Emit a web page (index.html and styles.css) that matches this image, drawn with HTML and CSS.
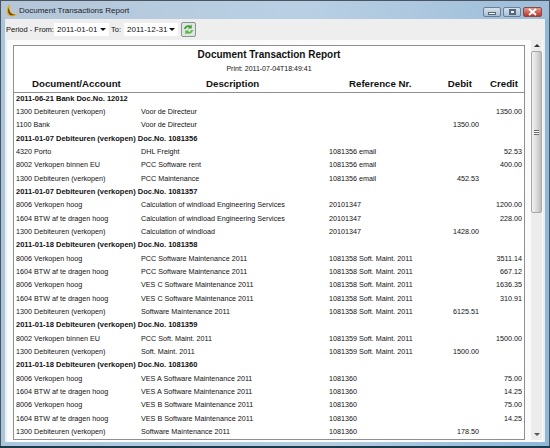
FILE: index.html
```html
<!DOCTYPE html>
<html lang="en">

<head>
    <meta charset="UTF-8">
    <title>Document Transactions Report</title>
    <link rel="stylesheet" href="styles.css">
</head>

<body>
    <div class="window">
        <div class="titlebar">
            <svg class="app-icon" width="13" height="13" viewBox="0 0 13 13">
                <path d="M5 0C1.500 3 1 8 3 11c3 2 7 1.500 10-.5C9.500 11 6.500 10 5.500 7.500 4.500 5 4.500 2.500 5 0z" fill="#e8ac14" />
                <path d="M3.500 3.500C2.500 6.500 3 9.500 5 11c2 .5 3.500.3 5.500-.3C8 10.700 5.500 9.500 4.500 7 4 6 3.700 4.800 3.500 3.500z" fill="#6e4408" />
            </svg>
            <span class="title">Document Transactions Report</span>
            <div class="win-buttons">
                <div class="win-btn"><span class="glyph-min"></span></div>
                <div class="win-btn"><span class="glyph-max"></span></div>
                <div class="win-btn close">
                    <svg width="9" height="8" viewBox="0 0 9 8">
                        <path d="M1 1l7 6M8 1L1 7" stroke="#fff" stroke-width="2" />
                    </svg>
                </div>
            </div>
        </div>

        <div class="toolbar">
            <span class="period-label">Period - From:</span>
            <div class="combo from"><span>2011-01-01</span><i class="caret"></i></div>
            <span class="to-label">To:</span>
            <div class="combo to"><span>2011-12-31</span><i class="caret"></i></div>
            <button class="refresh" type="button">
                <svg width="11" height="11" viewBox="0 0 12 12">
                    <path d="M1 5.500C1.500 2.500 5 .5 8 2L9.500.5V5H5l1.500-1.500C5 3 3.500 4 3 5.500z" fill="#3f9e35" />
                    <path d="M11 6.500C10.500 9.500 7 11.500 4 10L2.500 11.500V7H7L5.500 8.500C7 9 8.500 8 9 6.500z" fill="#58b84a" />
                </svg>
            </button>
        </div>

        <div class="content">
            <div class="page">
                <div class="report">
                    <div class="report-title">Document Transaction Report</div>
                    <div class="report-print">Print: 2011-07-04T18:49:41</div>
                    <table>
                        <thead>
                            <tr>
                                <th class="c-acc">Document/Account</th>
                                <th class="c-desc">Description</th>
                                <th class="c-ref">Reference Nr.</th>
                                <th class="c-deb">Debit</th>
                                <th class="c-cre">Credit</th>
                            </tr>
                        </thead>
                        <tbody>
                            <tr class="group"><td colspan="5">2011-06-21 Bank Doc.No. 12012</td></tr>
                            <tr><td>1300 Debiteuren (verkopen)</td><td>Voor de Directeur</td><td></td><td></td><td>1350.00</td></tr>
                            <tr><td>1100 Bank</td><td>Voor de Directeur</td><td></td><td>1350.00</td><td></td></tr>
                            <tr class="group"><td colspan="5">2011-01-07 Debiteuren (verkopen) Doc.No. 1081356</td></tr>
                            <tr><td>4320 Porto</td><td>DHL Freight</td><td>1081356 email</td><td></td><td>52.53</td></tr>
                            <tr><td>8002 Verkopen binnen EU</td><td>PCC Software rent</td><td>1081356 email</td><td></td><td>400.00</td></tr>
                            <tr><td>1300 Debiteuren (verkopen)</td><td>PCC Maintenance</td><td>1081356 email</td><td>452.53</td><td></td></tr>
                            <tr class="group"><td colspan="5">2011-01-07 Debiteuren (verkopen) Doc.No. 1081357</td></tr>
                            <tr><td>8006 Verkopen hoog</td><td>Calculation of windload Engineering Services</td><td>20101347</td><td></td><td>1200.00</td></tr>
                            <tr><td>1604 BTW af te dragen hoog</td><td>Calculation of windload Engineering Services</td><td>20101347</td><td></td><td>228.00</td></tr>
                            <tr><td>1300 Debiteuren (verkopen)</td><td>Calculation of windload</td><td>20101347</td><td>1428.00</td><td></td></tr>
                            <tr class="group"><td colspan="5">2011-01-18 Debiteuren (verkopen) Doc.No. 1081358</td></tr>
                            <tr><td>8006 Verkopen hoog</td><td>PCC Software Maintenance 2011</td><td>1081358 Soft. Maint. 2011</td><td></td><td>3511.14</td></tr>
                            <tr><td>1604 BTW af te dragen hoog</td><td>PCC Software Maintenance 2011</td><td>1081358 Soft. Maint. 2011</td><td></td><td>667.12</td></tr>
                            <tr><td>8006 Verkopen hoog</td><td>VES C Software Maintenance 2011</td><td>1081358 Soft. Maint. 2011</td><td></td><td>1636.35</td></tr>
                            <tr><td>1604 BTW af te dragen hoog</td><td>VES C Software Maintenance 2011</td><td>1081358 Soft. Maint. 2011</td><td></td><td>310.91</td></tr>
                            <tr><td>1300 Debiteuren (verkopen)</td><td>Software Maintenance 2011</td><td>1081358 Soft. Maint. 2011</td><td>6125.51</td><td></td></tr>
                            <tr class="group"><td colspan="5">2011-01-18 Debiteuren (verkopen) Doc.No. 1081359</td></tr>
                            <tr><td>8002 Verkopen binnen EU</td><td>PCC Soft. Maint. 2011</td><td>1081359 Soft. Maint. 2011</td><td></td><td>1500.00</td></tr>
                            <tr><td>1300 Debiteuren (verkopen)</td><td>Soft. Maint. 2011</td><td>1081359 Soft. Maint. 2011</td><td>1500.00</td><td></td></tr>
                            <tr class="group"><td colspan="5">2011-01-18 Debiteuren (verkopen) Doc.No. 1081360</td></tr>
                            <tr><td>8006 Verkopen hoog</td><td>VES A Software Maintenance 2011</td><td>1081360</td><td></td><td>75.00</td></tr>
                            <tr><td>1604 BTW af te dragen hoog</td><td>VES A Software Maintenance 2011</td><td>1081360</td><td></td><td>14.25</td></tr>
                            <tr><td>8006 Verkopen hoog</td><td>VES B Software Maintenance 2011</td><td>1081360</td><td></td><td>75.00</td></tr>
                            <tr><td>1604 BTW af te dragen hoog</td><td>VES B Software Maintenance 2011</td><td>1081360</td><td></td><td>14.25</td></tr>
                            <tr><td>1300 Debiteuren (verkopen)</td><td>Software Maintenance 2011</td><td>1081360</td><td>178.50</td><td></td></tr>
                        </tbody>
                    </table>
                </div>

                <div class="scrollbar">
                    <div class="arrow-up"></div>
                    <div class="thumb"><span class="grip"></span></div>
                    <div class="track"></div>
                    <div class="arrow-down"></div>
                </div>
            </div>
        </div>
    </div>
</body>

</html>
```

FILE: styles.css
```css
/* Basic Reset */
* {
    margin: 0;
    padding: 0;
    box-sizing: border-box;
}

body {
    width: 550px;
    height: 448px;
    overflow: hidden;
    font-family: 'Liberation Sans', Arial, sans-serif;
    color: #111;
    background: #1c3a4a;
}

.window {
    display: flex;
    flex-direction: column;
    height: 446px;
    border: 1px solid #4a5560;
    border-bottom: none;
    background: linear-gradient(90deg, #a9c6de, #b3cce0 60%, #8db8da);
}

/* Title bar */
.titlebar {
    display: flex;
    align-items: center;
    height: 18px;
    padding-left: 4px;
    background: linear-gradient(90deg, #b4c6d8, #b9d0e4 55%, #9dbdd9);
}

.app-icon {
    margin-right: 1px;
}

.title {
    font-size: 8px;
    color: #1c1c2a;
}

.win-buttons {
    display: flex;
    gap: 2px;
    margin-left: auto;
    margin-right: 7px;
    align-self: flex-start;
    margin-top: 6px;
}

.win-btn {
    display: flex;
    align-items: center;
    justify-content: center;
    width: 18px;
    height: 10px;
    border: 1px solid #6a7f96;
    border-radius: 2px;
    background: linear-gradient(#d5e1ec, #a9bed2);
}

.win-btn.close {
    width: 19px;
    border-color: #8a4a45;
    background: linear-gradient(#e09a90, #b8352b);
}

.glyph-min {
    width: 8px;
    height: 3px;
    margin-top: 3px;
    border: 1px solid #56657a;
    background: #fff;
}

.glyph-max {
    width: 7px;
    height: 6px;
    border: 2px solid #56657a;
    background: #eef3f7;
}

/* Period toolbar */
.toolbar {
    display: flex;
    align-items: center;
    height: 20px;
    margin: 0 4px;
    padding-left: 1px;
    font-size: 7.5px;
    background: #eeeeee;
}

.period-label {
    width: 48px;
    white-space: nowrap;
}

.to-label {
    width: 13px;
    margin-left: 2px;
}

.combo {
    display: flex;
    align-items: center;
    justify-content: space-between;
    height: 13px;
    padding: 0 3px;
    background: #fff;
    font-size: 8px;
}

.combo.from {
    width: 55px;
}

.combo.to {
    width: 54px;
}

.caret {
    width: 0;
    height: 0;
    border-left: 3px solid transparent;
    border-right: 3px solid transparent;
    border-top: 3px solid #111;
}

.refresh {
    display: flex;
    align-items: center;
    justify-content: center;
    width: 15px;
    height: 15px;
    margin-left: 3px;
    border: 1px solid #8a9490;
    border-radius: 2px;
    background: #dfe5df;
}

/* Report area */
.content {
    flex: 1;
    min-height: 0;
    margin: 0 4px 4px;
    padding: 1px 2px 0 2px;
    background: #eeeeee;
}

.page {
    display: flex;
    height: 100%;
    padding-left: 6px;
    background: #fbfbfb;
}

.report {
    width: 512px;
    margin: 5px 0 2px;
    border: 1px solid #8f8f8f;
    background: #fff;
    overflow: hidden;
}

.report-title {
    margin-top: 1px;
    height: 15px;
    line-height: 15px;
    text-align: center;
    font-size: 10px;
    font-weight: bold;
}

.report-print {
    margin-top: 2px;
    height: 10px;
    line-height: 10px;
    text-align: center;
    font-size: 7px;
}

table {
    width: 100%;
    border-collapse: collapse;
    table-layout: fixed;
    margin-top: 2px;
}

th {
    height: 16px;
    font-size: 9.7px;
    font-weight: bold;
    border-bottom: 1px solid #8f8f8f;
    white-space: nowrap;
}

.c-acc {
    width: 127px;
    text-align: left;
    padding-left: 18px;
}

.c-desc {
    width: 188px;
    text-align: left;
    padding-left: 65px;
}

.c-ref {
    width: 100px;
    text-align: left;
    padding-left: 20px;
}

.c-deb {
    width: 50px;
    text-align: right;
    padding-right: 7px;
}

.c-cre {
    width: 45px;
    text-align: right;
    padding-right: 6px;
}

td {
    height: 13.33px;
    font-size: 7.2px;
    line-height: 10px;
    white-space: nowrap;
}

td:first-child {
    padding-left: 2px;
}

td:nth-child(4) {
    text-align: right;
}

td:nth-child(5) {
    text-align: right;
    padding-right: 2px;
}

.group td {
    font-size: 7.5px;
    font-weight: bold;
    text-align: left;
}

/* Scrollbar */
.scrollbar {
    display: flex;
    flex-direction: column;
    width: 11px;
    margin: 0 0 2px 6px;
    background: #ececec;
}

.arrow-up,
.arrow-down {
    display: flex;
    align-items: center;
    justify-content: center;
    height: 11px;
}

.arrow-up::after,
.arrow-down::after {
    content: "";
    border-left: 3px solid transparent;
    border-right: 3px solid transparent;
}

.arrow-up::after {
    border-bottom: 3px solid #333;
}

.arrow-down::after {
    border-top: 3px solid #555;
}

.thumb {
    display: flex;
    align-items: center;
    justify-content: center;
    height: 162px;
    border: 1px solid #a8a8a8;
    border-radius: 2px;
    background: linear-gradient(90deg, #f2f2f2, #dcdcdc 50%, #bcbcbc);
}

.grip {
    width: 5px;
    height: 5px;
    border-top: 1px solid #666;
    border-bottom: 1px solid #666;
    background: linear-gradient(#fff 40%, #666 40%, #666 60%, #fff 60%);
}

.track {
    flex: 1;
}
```
